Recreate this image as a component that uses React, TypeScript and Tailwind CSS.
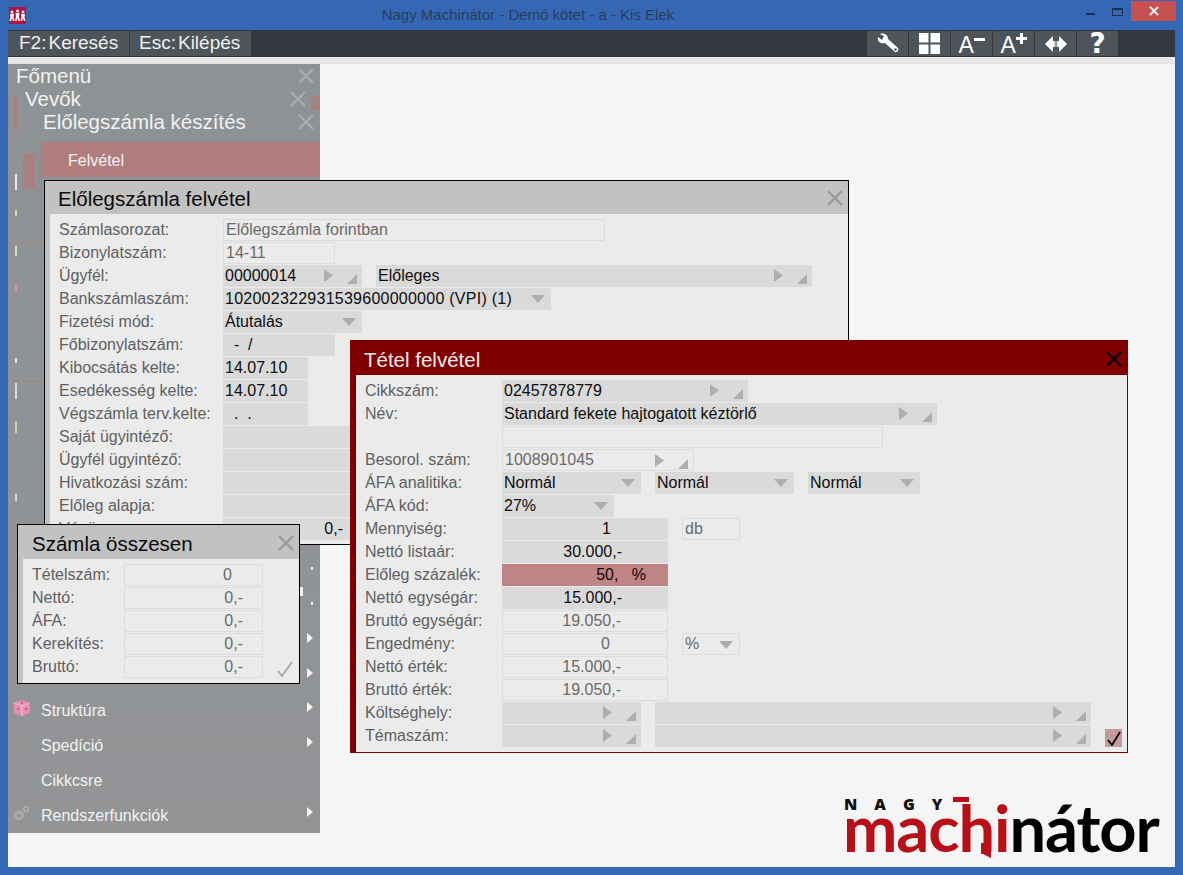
import React from "react";

const Tri = () => (
  <svg width="9" height="13" viewBox="0 0 9 13" className="absolute right-[29px] top-[4px]"><path d="M0 0 L9 6.5 L0 13Z" fill="#aeaeae" /></svg>
);
const Corner = () => (
  <svg width="10" height="10" viewBox="0 0 10 10" className="absolute right-[5px] top-[9px]"><path d="M10 0 V10 H0Z" fill="#aeaeae" /></svg>
);
const Down = () => (
  <svg width="14" height="8" viewBox="0 0 14 8" className="absolute right-[6px] top-[7px]"><path d="M0 0 H14 L7 8Z" fill="#aeaeae" /></svg>
);
const X = ({ c = "#a6a6a6", s = 18, w = 2.4 }: { c?: string; s?: number; w?: number }) => (
  <svg width={s} height={s} viewBox="0 0 18 18"><path d="M2 2 L16 16 M16 2 L2 16" stroke={c} strokeWidth={w} /></svg>
);
const Arrow = () => (
  <svg width="6" height="10" viewBox="0 0 6 10"><path d="M0 0 L6 5 L0 10Z" fill="#f2f2f2" /></svg>
);

type FProps = {
  w: number;
  text?: string;
  kind?: "solid" | "line" | "pink";
  align?: "left" | "right";
  pr?: number;
  tri?: boolean;
  down?: boolean;
  ml?: number;
  extra?: string;
};
const F = ({ w, text, kind = "solid", align = "left", pr = 0, tri, down, ml = 0, extra = "" }: FProps) => {
  const cls =
    kind === "solid"
      ? "bg-[#dadada] text-[#0d0d0d] leading-[21px]"
      : kind === "pink"
        ? "bg-[#bf8585] text-[#1a0000] leading-[21px]"
        : "bg-[#ebebeb] border border-[#dcdcdc] text-[#6a6a6a] leading-[19px]";
  return (
    <div
      className={`relative h-[22px] whitespace-pre shrink-0 px-[2px] ${cls} ${extra} ${align === "right" ? "text-right" : ""}`}
      style={{ width: w, marginLeft: ml, paddingRight: pr || undefined }}
    >
      {text}
      {tri && <Tri />}
      {tri && <Corner />}
      {down && <Down />}
    </div>
  );
};

const Row = ({ label, lw, children }: { label: string; lw: number; children?: React.ReactNode }) => (
  <div className="flex h-[22px] mb-[1px] leading-[21px]">
    <div className="text-[#5f5f5f] shrink-0" style={{ width: lw }}>{label}</div>
    {children}
  </div>
);

const MenuItem = ({ label, arrow, icon }: { label: string; arrow?: boolean; icon?: React.ReactNode }) => (
  <div className="relative h-[35px] flex items-center pl-[33px] text-[16px] text-[#f2f2f2]">
    {icon && <div className="absolute left-[5px] top-[6px]">{icon}</div>}
    {label}
    {arrow && <div className="absolute right-[7px] top-[9px]"><Arrow /></div>}
  </div>
);

const Cube = () => (
  <svg width="18" height="18" viewBox="0 0 18 18">
    <path d="M9 1 L17 4 V14 L9 17 L1 14 V4Z" fill="#e58fb3" />
    <path d="M1 4 L9 7 L17 4 M9 7 V17" stroke="#f4bcd2" strokeWidth="1" fill="none" />
    <circle cx="5" cy="10" r="1" fill="#b5527c" /><circle cx="13" cy="10" r="1" fill="#b5527c" /><circle cx="9" cy="4" r="1" fill="#b5527c" />
  </svg>
);
const Gears = () => (
  <svg width="18" height="18" viewBox="0 0 18 18">
    <circle cx="6" cy="11.5" r="3.6" fill="none" stroke="#a9abad" strokeWidth="3" />
    <circle cx="13" cy="5" r="2.4" fill="none" stroke="#a9abad" strokeWidth="2.2" />
  </svg>
);

const ToolBtn = ({ children }: { children: React.ReactNode }) => (
  <div className="w-[41px] h-[25px] bg-[#4e555a] mr-[1px] flex items-center justify-center">{children}</div>
);

export default function App() {
  return (
    <div className="w-[1183px] h-[875px] bg-[#3568b4] flex flex-col overflow-hidden font-['Liberation_Sans',Arial,sans-serif] text-[16px]">
      {/* title bar */}
      <div className="relative h-[30px] flex items-center justify-center pr-[127px] text-[15px] text-[#2a3c5c] shrink-0">
        <svg width="17" height="17" viewBox="0 0 17 17" className="absolute left-[9px] top-[7px]">
          <rect width="17" height="17" fill="#b3123f" />
          <g fill="#fff">
            <circle cx="3" cy="5" r="1.5" /><circle cx="8.5" cy="4" r="1.5" /><circle cx="14" cy="5" r="1.5" />
            <path d="M1 7 h4 l-0.5 3 1 4 h-1.5 l-1 -3 -1 3 h-1.5 l1 -4Z M6.5 6 h4 l-0.5 3.5 1 4.5 h-1.5 l-1 -3 -1 3 h-1.5 l1 -4.5Z M12 7 h4 l-0.5 3 1 4 h-1.5 l-1 -3 -1 3 h-1.5 l1 -4Z" />
          </g>
        </svg>
        Nagy Machinátor - Demó kötet - a - Kis Elek
        <div className="absolute right-[7px] top-[1px] flex items-start">
          <div className="w-[9px] h-[2px] bg-[#1b2f52] mt-[12px] mr-[17px]" />
          <div className="w-[11px] h-[8px] border border-[#1b2f52] border-t-[2px] mt-[7px] mr-[8px]" />
          <div className="w-[45px] h-[20px] bg-[#c75050] flex items-center justify-center">
            <svg width="10" height="10" viewBox="0 0 10 10"><path d="M1 1 L9 9 M9 1 L1 9" stroke="#fff" strokeWidth="1.8" /></svg>
          </div>
        </div>
      </div>

      <div className="flex-1 mx-[8px] flex flex-col min-h-0">
        {/* toolbar */}
        <div className="h-[27px] bg-[#32383d] flex items-center justify-between shrink-0 text-[#eef0f1] text-[19px]">
          <div className="flex h-[25px]">
            <div className="w-[121px] bg-[#4e555a] mr-[1px] flex items-center pl-[11px]">F2:<span className="ml-[2px]">Keresés</span></div>
            <div className="w-[121px] bg-[#4e555a] flex items-center pl-[9px]">Esc:<span className="ml-[2px]">Kilépés</span></div>
          </div>
          <div className="flex mr-[56px] h-[25px]">
            <ToolBtn>
              <svg width="24" height="22" viewBox="0 0 24 22"><path d="M2 4 L6 7 L8 3 L4 1 C8 -0.5 12 2 12 6 L22 15 C23.5 17 21 20 19 19 L9 10 C5 11 1 9 2 4Z" fill="#fff" /><circle cx="19.5" cy="16.5" r="1.2" fill="#4e555a" /></svg>
            </ToolBtn>
            <ToolBtn>
              <svg width="21" height="21" viewBox="0 0 21 21"><path d="M0 0 H9.5 V9.5 H0Z M11.5 0 H21 V9.5 H11.5Z M0 11.5 H9.5 V21 H0Z M11.5 11.5 H21 V21 H11.5Z" fill="#fff" /></svg>
            </ToolBtn>
            <ToolBtn>
              <div className="relative w-[24px] h-[25px]">
                <span className="absolute left-[-1px] top-[2px] text-[23px] leading-[25px] text-white">A</span>
                <div className="absolute right-[-1px] top-[7px] w-[11px] h-[3px] bg-white" />
              </div>
            </ToolBtn>
            <ToolBtn>
              <div className="relative w-[24px] h-[25px]">
                <span className="absolute left-[-1px] top-[2px] text-[23px] leading-[25px] text-white">A</span>
                <div className="absolute right-[-1px] top-[6px] w-[11px] h-[3px] bg-white" />
                <div className="absolute right-[3px] top-[2px] w-[3px] h-[11px] bg-white" />
              </div>
            </ToolBtn>
            <ToolBtn>
              <svg width="22" height="16" viewBox="0 0 22 16"><path d="M0 8 L8 0 V5 H14 V0 L22 8 L14 16 V11 H8 V16Z" fill="#fff" /><path d="M10.2 3 V13 M11.8 3 V13" stroke="#4e555a" strokeWidth="0.8" /></svg>
            </ToolBtn>
            <ToolBtn>
              <span className="text-[28px] font-bold text-white leading-none font-['DejaVu_Sans',sans-serif]">?</span>
            </ToolBtn>
          </div>
        </div>
        {/* hatched strip */}
        <div className="h-[7px] bg-[#e6e6e6] shrink-0" />

        {/* desktop */}
        <div className="relative flex-1 bg-[#f5f5f6] min-h-0 mb-[8px]">
          {/* menu */}
          <div className="absolute left-0 top-0 w-[312px] h-[769px] bg-gradient-to-b from-[#8e9295] to-[#929496] text-[#f2f2f2] overflow-hidden">
            <div className="relative h-[23px] pl-[8px] text-[20.5px] leading-[24px]">Főmenü<span className="absolute right-[5px] top-[3px]"><X c="#a9adb0" /></span></div>
            <div className="relative h-[23px] pl-[17px] text-[20.5px] leading-[24px]">Vevők<span className="absolute right-[13px] top-[3px]"><X c="#a9adb0" /></span></div>
            <div className="relative h-[24px] pl-[35px] text-[20.5px] leading-[24px]">Előlegszámla készítés<span className="absolute right-[5px] top-[3px]"><X c="#a9adb0" /></span></div>
            <div className="ml-[33px] h-[35px] mt-[8px] pt-[3px] bg-[#b17e7e] flex items-center pl-[27px] text-[16px]">Felvétel</div>
            <div className="absolute right-0 top-[32px] w-[9px] h-[14px] bg-[#a98080]" />
            <div className="absolute left-[6px] top-[32px] w-[3px] h-[35px] bg-[#a98080]" />
            <div className="absolute left-[15px] top-[90px] w-[12px] h-[35px] bg-[#a98080]" />
            <div className="absolute left-[7px] top-[110px] w-[2px] h-[16px] bg-[#e8e8e8]" />
            <div className="absolute left-[7px] top-[146px] w-[2px] h-[6px] bg-[#cfd6a8]" />
            <div className="absolute left-[7px] top-[182px] w-[2px] h-[10px] bg-[#d9d9c4]" />
            <div className="absolute left-[7px] top-[220px] w-[2px] h-[8px] bg-[#c99a9a]" />
            <div className="absolute left-[7px] top-[294px] w-[2px] h-[5px] bg-[#e8e8e8]" />
            <div className="absolute left-[7px] top-[319px] w-[2px] h-[16px] bg-[#dcdcdc]" />
            <div className="absolute left-[7px] top-[357px] w-[2px] h-[12px] bg-[#cfcfba]" />
            <div className="absolute left-[7px] top-[430px] w-[2px] h-[7px] bg-[#cfdde6]" />
            <div className="absolute left-[14px] top-[177px] w-[13px] h-[1px] bg-[#a98080]" />
            <div className="absolute left-[14px] top-[317px] w-[24px] h-[1px] bg-[#a98080]" />
            <div className="absolute top-[629px] inset-x-0">
              <MenuItem label="Struktúra" arrow icon={<Cube />} />
              <MenuItem label="Spedíció" arrow />
              <MenuItem label="Cikkcsre" />
              <MenuItem label="Rendszerfunkciók" arrow icon={<Gears />} />
            </div>
            <div className="absolute right-[7px] top-[569px]"><Arrow /></div>
            <div className="absolute right-[7px] top-[604px]"><Arrow /></div>
            <div className="absolute left-[292px] top-[523px] w-[3px] h-[9px] bg-[#f2f2f2]" />
            <div className="absolute left-[303px] top-[503px] w-[2px] h-[3px] bg-[#f2f2f2]" />
            <div className="absolute left-[303px] top-[538px] w-[2px] h-[3px] bg-[#f2f2f2]" />
          </div>

          {/* Előlegszámla felvétel */}
          <div className="absolute left-[36px] top-[116px] w-[805px] h-[365px] border border-black bg-[#c2c2c2] flex flex-col">
            <div className="relative h-[33px] shrink-0 pl-[13px] text-[20.5px] leading-[36px] text-[#0a0a0a]">
              Előlegszámla felvétel
              <span className="absolute right-[4px] top-[8px]"><X c="#9a9a9a" /></span>
            </div>
            <div className="flex-1 ml-[5px] bg-[#ebebeb] pt-[5px] pl-[9px] overflow-hidden">
              <Row label="Számlasorozat:" lw={164}><F w={382} kind="line" text="Előlegszámla forintban" /></Row>
              <Row label="Bizonylatszám:" lw={164}><F w={112} kind="line" text="14-11" /></Row>
              <Row label="Ügyfél:" lw={164}>
                <F w={139} text="00000014" tri />
                <F w={436} ml={14} text="Előleges" tri />
              </Row>
              <Row label="Bankszámlaszám:" lw={164}><F w={328} extra="tracking-[0.25px]" text="102002322931539600000000 (VPI) (1)" down /></Row>
              <Row label="Fizetési mód:" lw={164}><F w={139} text="Átutalás" down /></Row>
              <Row label="Főbizonylatszám:" lw={164}><F w={112} text="  -  /" /></Row>
              <Row label="Kibocsátás kelte:" lw={164}><F w={85} text="14.07.10" /></Row>
              <Row label="Esedékesség kelte:" lw={164}><F w={85} text="14.07.10" /></Row>
              <Row label="Végszámla terv.kelte:" lw={164}><F w={85} text="  .  ." /></Row>
              <Row label="Saját ügyintéző:" lw={164}><F w={140} /></Row>
              <Row label="Ügyfél ügyintéző:" lw={164}><F w={140} /></Row>
              <Row label="Hivatkozási szám:" lw={164}><F w={140} /></Row>
              <Row label="Előleg alapja:" lw={164}><F w={140} /></Row>
              <Row label="Végösszeg:" lw={164}><F w={140} align="right" text="0,-" pr={20} /></Row>
            </div>
          </div>

          {/* Számla összesen */}
          <div className="absolute left-[9px] top-[460px] w-[283px] h-[160px] border border-black bg-[#c2c2c2] flex flex-col">
            <div className="relative h-[34px] shrink-0 pl-[14px] text-[20.5px] leading-[38px] text-[#0a0a0a]">
              Számla összesen
              <span className="absolute right-[4px] top-[9px]"><X c="#9a9a9a" /></span>
            </div>
            <div className="relative flex-1 ml-[5px] bg-[#ebebeb] pt-[5px] pl-[9px]">
              {[["Tételszám:", "0", 30], ["Nettó:", "0,-", 19], ["ÁFA:", "0,-", 19], ["Kerekítés:", "0,-", 19], ["Bruttó:", "0,-", 19]].map(([l, v, p]) => (
                <Row key={l as string} label={l as string} lw={92}><F w={139} kind="line" align="right" text={v as string} pr={p as number} /></Row>
              ))}
              <svg width="16" height="16" viewBox="0 0 16 16" className="absolute right-[6px] bottom-[6px]"><path d="M1 10 L5 15 L15 1" stroke="#a6a6a6" strokeWidth="1.8" fill="none" /></svg>
            </div>
          </div>

          {/* Tétel felvétel */}
          <div className="absolute left-[342px] top-[276px] w-[778px] h-[413px] border border-[#800000] bg-[#800000] flex flex-col">
            <div className="relative h-[34px] shrink-0 pl-[13px] text-[20.5px] leading-[38px] text-[#f6eeee]">
              Tétel felvétel
              <span className="absolute right-[4px] top-[9px]"><X c="#0a0000" s={18} w={2.4} /></span>
            </div>
            <div className="relative flex-1 ml-[5px] bg-[#ebebeb] pt-[5px] pl-[9px]">
              <Row label="Cikkszám:" lw={137}><F w={246} text="02457878779" tri /></Row>
              <Row label="Név:" lw={137}><F w={435} text="Standard fekete hajtogatott kéztörlő" tri /></Row>
              <Row label="" lw={137}><F w={381} kind="line" /></Row>
              <Row label="Besorol. szám:" lw={137}><F w={192} kind="line" text="1008901045" tri /></Row>
              <Row label="ÁFA analitika:" lw={137}>
                <F w={139} text="Normál" down />
                <F w={139} ml={14} text="Normál" down />
                <F w={112} ml={14} text="Normál" down />
              </Row>
              <Row label="ÁFA kód:" lw={137}><F w={112} text="27%" down /></Row>
              <Row label="Mennyiség:" lw={137}>
                <F w={166} align="right" text="1" pr={57} />
                <F w={58} ml={14} kind="line" text="db" />
              </Row>
              <Row label="Nettó listaár:" lw={137}><F w={166} align="right" text="30.000,-" pr={46} /></Row>
              <Row label="Előleg százalék:" lw={137}><F w={166} kind="pink" align="right" text="50,   %" pr={22} /></Row>
              <Row label="Nettó egységár:" lw={137}><F w={166} align="right" text="15.000,-" pr={46} /></Row>
              <Row label="Bruttó egységár:" lw={137}><F w={166} kind="line" align="right" text="19.050,-" pr={46} /></Row>
              <Row label="Engedmény:" lw={137}>
                <F w={166} kind="line" align="right" text="0" pr={57} />
                <F w={58} ml={14} kind="line" text="%" down />
              </Row>
              <Row label="Nettó érték:" lw={137}><F w={166} kind="line" align="right" text="15.000,-" pr={46} /></Row>
              <Row label="Bruttó érték:" lw={137}><F w={166} kind="line" align="right" text="19.050,-" pr={46} /></Row>
              <Row label="Költséghely:" lw={137}>
                <F w={139} tri />
                <F w={436} ml={14} tri />
              </Row>
              <Row label="Témaszám:" lw={137}>
                <F w={139} tri />
                <F w={436} ml={14} tri />
              </Row>
              <div className="absolute right-[5px] bottom-[5px] w-[17px] h-[18px] bg-[#c49a9a] flex items-center justify-center">
                <svg width="14" height="15" viewBox="0 0 14 15"><path d="M1 9 L5 14 L13 1" stroke="#0a0a0a" strokeWidth="1.8" fill="none" /></svg>
              </div>
            </div>
          </div>

          {/* logo */}
          <div className="absolute left-[836px] top-[729px] w-[322px] h-[70px] font-['Lato',sans-serif]">
            <div className="absolute left-0 top-[2px] text-[16px] leading-[18px] font-black tracking-[17px] text-[#111] font-['Open_Sans',sans-serif] whitespace-pre">NAGY</div>
            <div className="absolute left-[-1px] top-[-6px] text-[65px] leading-[80px] font-bold tracking-[-1.1px] whitespace-pre">
              <span className="text-[#b90f19]">machi</span><span className="text-black">nátor</span>
            </div>
            <div className="absolute left-[109px] top-[4px] w-[16px] h-[5px] bg-[#b90f19]" />
            <svg width="14" height="18" viewBox="0 0 14 18" className="absolute left-[136px] top-[50px]"><path d="M1 0 H11 V15 L3 11 H1Z" fill="#b90f19" /></svg>
          </div>
        </div>
      </div>
    </div>
  );
}
